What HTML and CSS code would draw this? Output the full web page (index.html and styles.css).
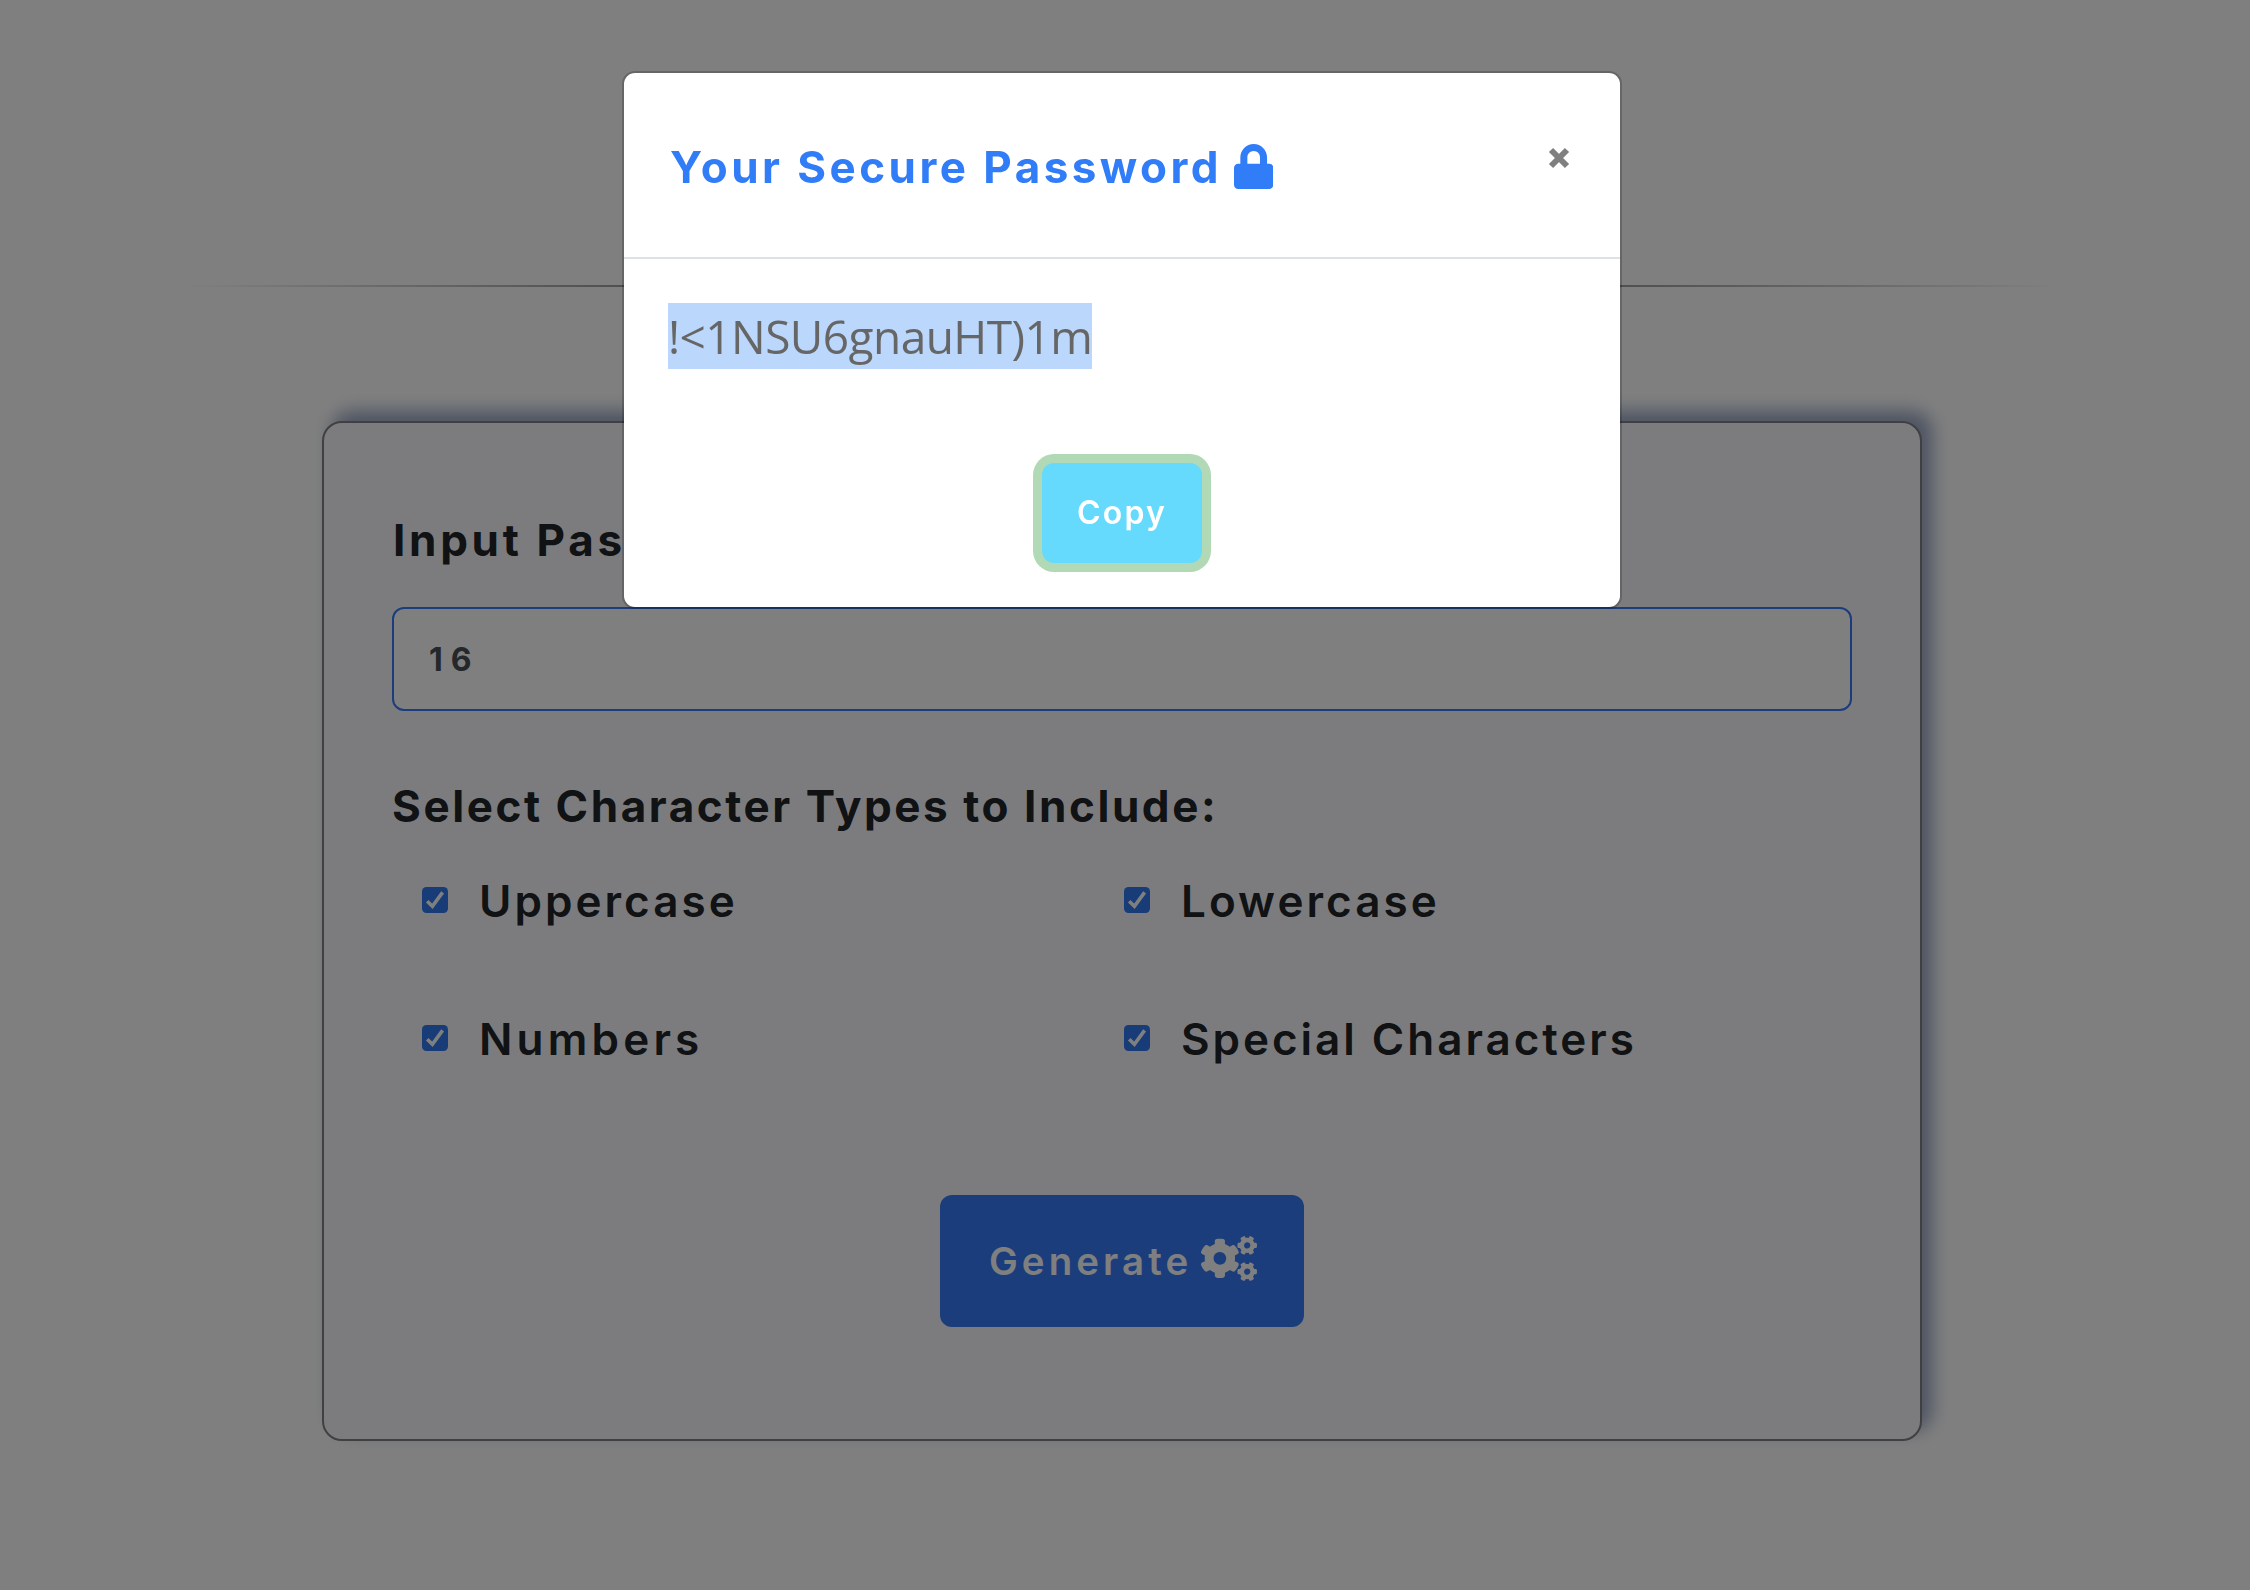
FILE: index.html
```html
<!DOCTYPE html>
<html lang="en">
<head>
<meta charset="utf-8">
<title>Password Generator</title>
<link rel="stylesheet" href="styles.css">
</head>
<body>
<svg class="defs" aria-hidden="true">
  <symbol id="check" viewBox="0 0 26 26">
    <rect width="26" height="26" rx="4.5" fill="#2f79ee"/>
    <path d="M5.2 14.2 10.4 19.2 20.6 5.4" fill="none" stroke="#fff" stroke-width="3.6"/>
  </symbol>
</svg>

<main class="page">
  <hr class="rule">
  <form class="card">
    <label class="heading heading-length" for="length">Input Password Length:</label>
    <div class="field" id="length">16</div>
    <div class="heading heading-types">Select Character Types to Include:</div>
    <div class="options">
      <label class="option upper"><svg class="box"><use href="#check"/></svg><span>Uppercase</span></label>
      <label class="option lower"><svg class="box"><use href="#check"/></svg><span>Lowercase</span></label>
      <label class="option numbers"><svg class="box"><use href="#check"/></svg><span>Numbers</span></label>
      <label class="option special"><svg class="box"><use href="#check"/></svg><span>Special Characters</span></label>
    </div>
    <button type="button" class="generate"><span>Generate</span>
      <svg class="gears" viewBox="0 0 640 512" fill="currentColor">
        <path id="gear-small" d="M512.1 191l-8.2 14.3c-3 5.3-9.4 7.5-15.1 5.4-11.8-4.4-22.6-10.7-32.1-18.6-4.6-3.8-5.8-10.5-2.8-15.7l8.2-14.3c-6.9-8-12.3-17.3-15.9-27.4h-16.5c-6 0-11.2-4.3-12.2-10.3-2-12-2.1-24.6 0-37.1 1-6 6.2-10.4 12.2-10.4h16.5c3.6-10.1 9-19.4 15.9-27.4l-8.2-14.3c-3-5.2-1.9-11.9 2.8-15.7 9.5-7.9 20.4-14.2 32.1-18.6 5.7-2.1 12.1.1 15.1 5.4l8.2 14.3c10.5-1.9 21.2-1.9 31.7 0L552 6.3c3-5.3 9.4-7.5 15.1-5.4 11.8 4.4 22.6 10.7 32.1 18.6 4.6 3.8 5.8 10.5 2.8 15.7l-8.2 14.3c6.9 8 12.3 17.3 15.9 27.4h16.5c6 0 11.2 4.3 12.2 10.3 2 12 2.1 24.6 0 37.1-1 6-6.2 10.4-12.2 10.4h-16.5c-3.6 10.1-9 19.4-15.9 27.4l8.2 14.3c3 5.2 1.9 11.9-2.8 15.7-9.5 7.9-20.4 14.2-32.1 18.6-5.7 2.1-12.1-.1-15.1-5.4l-8.2-14.3c-10.4 1.9-21.2 1.9-31.7 0zm-10.5-58.8c38.5 29.6 82.4-14.3 52.8-52.8-38.5-29.7-82.4 14.3-52.8 52.8z"/>
        <use href="#gear-small" y="300"/>
        <path d="M386.3 286.1l33.7 16.8c10.1 5.8 14.5 18.1 10.5 29.1-8.9 24.2-26.4 46.4-42.6 65.8-7.4 8.9-20.2 11.1-30.3 5.3l-29.1-16.8c-16 13.7-34.6 24.6-54.9 31.7v33.6c0 11.6-8.3 21.6-19.7 23.6-24.6 4.2-50.4 4.4-75.9 0-11.5-2-20-11.9-20-23.6V418c-20.3-7.2-38.9-18-54.9-31.7L74 403c-10 5.8-22.9 3.6-30.3-5.3-16.2-19.4-33.3-41.6-42.2-65.7-4-10.9.4-23.2 10.5-29.1l33.3-16.8c-3.9-20.9-3.9-42.4 0-63.4L12 205.8c-10.1-5.8-14.6-18.1-10.5-29 8.9-24.2 26-46.4 42.2-65.8 7.4-8.9 20.2-11.1 30.3-5.3l29.1 16.8c16-13.7 34.6-24.6 54.9-31.7V57.1c0-11.5 8.2-21.5 19.6-23.5 24.6-4.2 50.5-4.4 76-.1 11.5 2 20 11.9 20 23.6v33.6c20.3 7.2 38.9 18 54.9 31.7l29.1-16.8c10-5.8 22.9-3.6 30.3 5.3 16.2 19.4 33.2 41.6 42.1 65.8 4 10.9.1 23.2-10 29.1l-33.7 16.8c3.9 21 3.9 42.5 0 63.5zm-117.6 21.1c59.2-77-28.7-164.9-105.7-105.7-59.2 77 28.7 164.9 105.7 105.7z"/>
      </svg>
    </button>
  </form>
</main>

<div class="overlay">
  <section class="dialog" role="dialog">
    <header class="dialog-head">
      <h1 class="title">Your Secure Password</h1>
      <svg class="lock" viewBox="0 0 448 512" fill="currentColor"><path d="M400 224h-24v-72C376 68.2 307.8 0 224 0S72 68.2 72 152v72H48c-26.5 0-48 21.5-48 48v192c0 26.5 21.5 48 48 48h352c26.5 0 48-21.5 48-48V272c0-26.5-21.5-48-48-48zm-104 0H152v-72c0-39.7 32.3-72 72-72s72 32.3 72 72v72z"/></svg>
      <svg class="close" viewBox="0 0 22 22"><path d="M3 3 19 19M19 3 3 19" fill="none" stroke="#808080" stroke-width="6"/></svg>
    </header>
    <div class="dialog-body">
      <span class="password">!&lt;1NSU6gnauHT)1m</span>
      <button type="button" class="copy">Copy</button>
    </div>
  </section>
</div>
</body>
</html>
```
FILE: styles.css
```css
* {
  box-sizing: border-box;
}

body {
  margin: 0;
  height: 1590px;
  overflow: hidden;
  background: #fff;
  color: #212529;
  font-family: Inter, sans-serif;
}

button {
  border: 0;
  font-family: inherit;
}

.defs {
  display: none;
}

.page {
  width: 2244px;
  padding-top: 285px;
}

.rule {
  width: 1876px;
  height: 2px;
  margin: 0 auto 134px;
  border: 0;
  background: linear-gradient(to right, transparent, rgba(0, 0, 0, .8), transparent);
}

.card {
  display: flex;
  flex-direction: column;
  width: 1600px;
  height: 1020px;
  margin: 0 auto;
  padding: 85px 68px 0;
  border: 2px solid #808080;
  border-radius: 20px;
  background: #f8f9ff;
  box-shadow: 10px -10px 18px #98a6c4;
}

.heading {
  font-size: 44px;
  font-weight: 700;
  line-height: 64px;
  white-space: nowrap;
}

.heading-length {
  padding-left: 1px;
  letter-spacing: 3.7px;
}

.field {
  height: 104px;
  margin: 35px 0 63px;
  padding-left: 35px;
  border: 2px solid #367bf6;
  border-radius: 12px;
  background: #fff;
  color: #495057;
  font-size: 32px;
  font-weight: 700;
  line-height: 102px;
  letter-spacing: 8px;
}

.heading-types {
  letter-spacing: 2.57px;
}

.options {
  display: grid;
  grid-template-columns: 702px 702px;
  row-gap: 74px;
  margin: 31px 0 124px;
  padding-left: 30px;
}

.option {
  display: flex;
  align-items: center;
  gap: 31px;
  font-size: 44px;
  font-weight: 600;
  line-height: 64px;
}

.box {
  width: 26px;
  height: 26px;
  margin-bottom: 2px;
}

.upper { letter-spacing: 3.05px; }
.lower { letter-spacing: 3.05px; }
.numbers { letter-spacing: 4.2px; }
.special { letter-spacing: 2.97px; }

.generate {
  display: flex;
  align-items: center;
  align-self: center;
  justify-content: space-between;
  width: 364px;
  height: 132px;
  padding: 0 47px 0 49px;
  border-radius: 12px;
  background: #367bf6;
  color: #fff;
  font-size: 38.4px;
  font-weight: 600;
  letter-spacing: 4.1px;
}

.gears {
  width: 56px;
  height: 45px;
  margin-bottom: 6px;
}

.overlay {
  position: fixed;
  inset: 0;
  padding-top: 71px;
  background: rgba(0, 0, 0, .5);
}

.dialog {
  width: 1000px;
  height: 538px;
  margin-left: 622px;
  border: 2px solid rgba(0, 0, 0, .2);
  border-radius: 13px;
  background: #fff;
  background-clip: padding-box;
}

.dialog-head {
  display: flex;
  height: 186px;
  padding: 50px 50px 0 46px;
  border-bottom: 2px solid #dee2e6;
  color: #317cf7;
}

.title {
  margin: 0;
  font-size: 44px;
  font-weight: 700;
  line-height: 88px;
  letter-spacing: 3.45px;
  width: 552px;
  white-space: nowrap;
}

.lock {
  width: 39.4px;
  height: 45px;
  margin: 21px 0 0 12px;
}

.close {
  width: 22px;
  height: 22px;
  margin: 24px 0 0 auto;
}

.dialog-body {
  display: flex;
  flex-direction: column;
  align-items: center;
  padding-top: 44px;
}

.password {
  align-self: flex-start;
  width: 424px;
  height: 66px;
  margin: 0 0 94px 44px;
  background: #bbd7fb;
  color: #666;
  font-family: "Open Sans", sans-serif;
  font-size: 46px;
  line-height: 66px;
  letter-spacing: -.55px;
  white-space: nowrap;
}

.copy {
  width: 160px;
  height: 100px;
  padding: 0 0 1px;
  border-radius: 12px;
  background: #66dafc;
  box-shadow: 0 0 0 9px #b2d9b5;
  color: #fff;
  font-size: 32px;
  font-weight: 600;
  letter-spacing: 2.2px;
}
```
